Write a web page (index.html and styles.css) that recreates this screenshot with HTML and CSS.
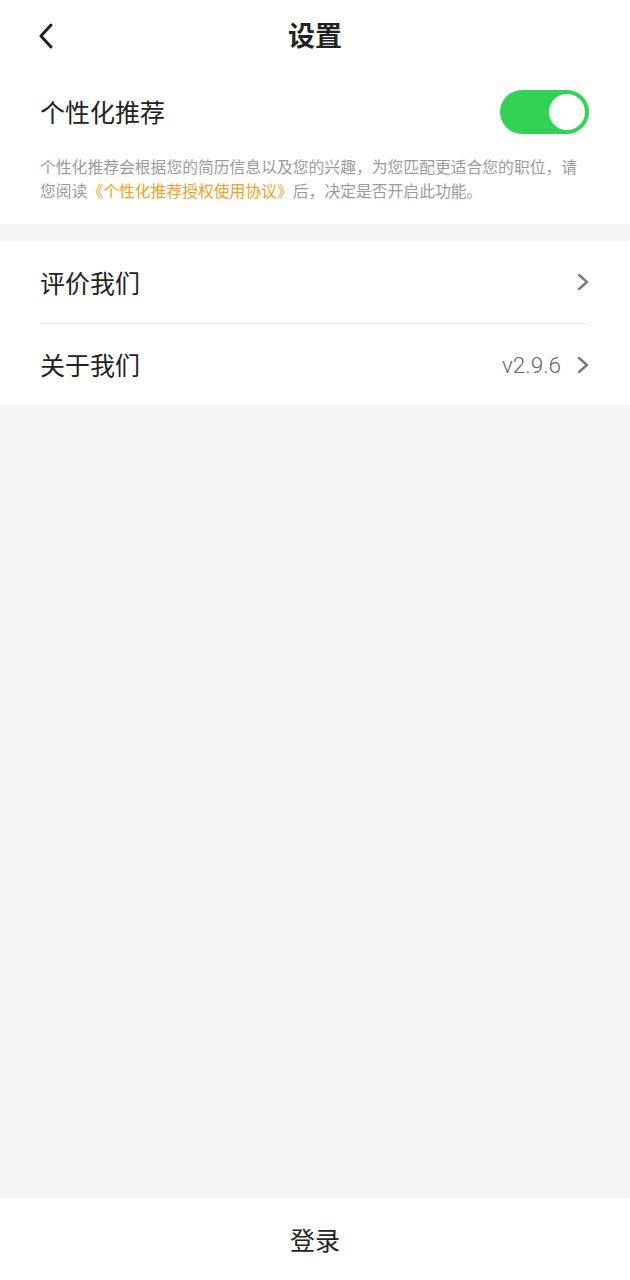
FILE: index.html
```html
<!DOCTYPE html>
<html lang="zh">
<head>
<meta charset="utf-8">
<title>设置</title>
<link rel="stylesheet" href="styles.css">
</head>
<body>
<div class="page">
  <header class="nav">
    <svg class="back" width="16" height="26" viewBox="0 0 16 26"><path d="M13 2 L3 13 L13 24" fill="none" stroke="#222" stroke-width="3" stroke-linecap="round" stroke-linejoin="round"/></svg>
    <h1 class="title">设置</h1>
  </header>
  <section class="rec">
    <div class="rec-row">
      <span class="rec-label">个性化推荐</span>
      <span class="toggle"><span class="knob"></span></span>
    </div>
    <p class="rec-desc">个性化推荐会根据您的简历信息以及您的兴趣，为您匹配更适合您的职位，请<br>您阅读<span class="link">《个性化推荐授权使用协议》</span>后，决定是否开启此功能。</p>
  </section>
  <section class="list">
    <div class="item">
      <span class="item-label">评价我们</span>
      <span class="item-right">
        <svg class="chev" width="12" height="18" viewBox="0 0 12 18"><path d="M2 2 L10 9 L2 16" fill="none" stroke="#7a7a7a" stroke-width="2.4" stroke-linecap="round" stroke-linejoin="round"/></svg>
      </span>
    </div>
    <div class="item">
      <span class="item-label">关于我们</span>
      <span class="item-right">
        <span class="version">v2.9.6</span>
        <svg class="chev" width="12" height="18" viewBox="0 0 12 18"><path d="M2 2 L10 9 L2 16" fill="none" stroke="#7a7a7a" stroke-width="2.4" stroke-linecap="round" stroke-linejoin="round"/></svg>
      </span>
    </div>
  </section>
  <div class="spacer"></div>
  <footer class="login">登录</footer>
</div>
</body>
</html>
```

FILE: styles.css
```css
* { box-sizing: border-box; }
html, body { margin: 0; padding: 0; }
body {
  font-family: "Noto Sans CJK SC", "Noto Sans", sans-serif;
  background: #f5f5f5;
  color: #333;
}
.page {
  width: 630px;
  height: 1280px;
  display: flex;
  flex-direction: column;
}
.nav {
  background: #fff;
  height: 68px;
  display: flex;
  align-items: center;
  justify-content: center;
  position: relative;
}
.back {
  position: absolute;
  left: 38px;
  top: 23px;
}
.title {
  margin: 0;
  font-size: 27px;
  font-weight: 700;
  color: #222;
  line-height: 1;
}
.rec {
  background: #fff;
  padding: 0 20px 21px 40px;
}
.rec-row {
  height: 87px;
  display: flex;
  align-items: center;
  justify-content: space-between;
  margin-right: 20px;
}
.rec-label {
  font-size: 25px;
  color: #222;
  line-height: 1;
}
.toggle {
  width: 89px;
  height: 44px;
  border-radius: 22px;
  background: #33d257;
  display: flex;
  align-items: center;
  justify-content: flex-end;
  padding-right: 4px;
  margin-right: 1px;
}
.knob {
  width: 36px;
  height: 36px;
  border-radius: 50%;
  background: #fff;
}
.rec-desc {
  margin: 0;
  font-size: 15.8px;
  line-height: 24px;
  color: #9a9a9a;
  white-space: nowrap;
}
.link { color: #f0a020; }
.list {
  background: #fff;
  margin-top: 17px;
  padding: 0 41px 0 40px;
}
.item {
  height: 82px;
  display: flex;
  align-items: center;
  justify-content: space-between;
}
.item + .item { border-top: 1px solid #ebebeb; }
.item-label {
  font-size: 25px;
  color: #222;
  line-height: 1;
}
.item-right {
  display: flex;
  align-items: center;
  gap: 16px;
}
.version {
  font-family: Roboto, "Noto Sans", sans-serif;
  font-size: 22.5px;
  font-weight: 300;
  color: #666;
}
.spacer { flex: 1; }
.login {
  background: #fff;
  height: 82px;
  display: flex;
  align-items: center;
  justify-content: center;
  font-size: 25px;
  color: #222;
}
```
